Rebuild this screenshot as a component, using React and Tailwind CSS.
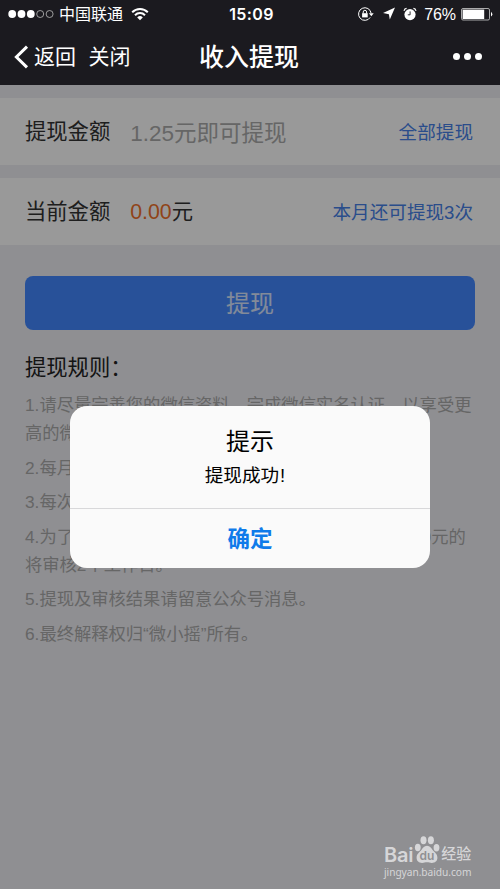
const rules = [
  ["1.请尽量完善您的微信资料，完成微信实名认证，以享受更", "高的微信提现额度。"],
  ["2.每月可提现3次。"],
  ["3.每次提现金额不低于1.25元。"],
  ["4.为了保障您的账户资金安全，单次提现金额大于100元的", "将审核2个工作日。"],
  ["5.提现及审核结果请留意公众号消息。"],
  ["6.最终解释权归“微小摇”所有。"],
];

const StatusBar = () => {
  return (
    <div className="h-7 flex items-center justify-between relative">
      <div className="flex items-center pl-2">
        <svg width="46" height="10" viewBox="0 0 46 10" fill="white">
          <circle cx="4.2" cy="5" r="3.9" />
          <circle cx="13.5" cy="5" r="3.9" />
          <circle cx="22.8" cy="5" r="3.9" />
          <circle cx="32.2" cy="5" r="3.5" fill="none" stroke="#bbb" strokeWidth="0.8" />
          <circle cx="41.6" cy="5" r="3.5" fill="none" stroke="#bbb" strokeWidth="0.8" />
        </svg>
        <span className="ml-[5px] pt-px text-[16px] leading-7">中国联通</span>
        <svg className="ml-2 -mt-px" width="18" height="14" viewBox="0 0 18 14" fill="none" stroke="white" strokeWidth="2">
          <path d="M1.2 5.2a11 11 0 0 1 15.6 0" />
          <path d="M4 8.2a7 7 0 0 1 10 0" />
          <path d="M9 13.2 6.2 10.4a4 4 0 0 1 5.6 0z" fill="white" stroke="none" />
        </svg>
      </div>

      <span className="absolute left-1/2 top-0 -translate-x-1/2 ml-[1.5px] font-[Inter] font-semibold text-[16px] leading-7 tracking-[0.4px]">
        15:09
      </span>

      <div className="flex items-center pr-[7px]">
        {/* Rotation lock */}
        <svg className="-mt-px" width="16" height="14" viewBox="0 0 16 14" fill="none" stroke="white" strokeWidth="1">
          <path d="M12.2 10.4A6.3 6.3 0 1 1 13.1 6.2" />
          <path d="M10.9 6.2h4.8l-2.4 3z" fill="white" stroke="none" />
          <rect x="4.1" y="6.2" width="5.6" height="4.2" fill="white" stroke="none" />
          <path d="M5.2 6.5V5a1.7 1.7 0 0 1 3.4 0v1.5" />
        </svg>
        {/* Location */}
        <svg className="ml-[9px] -mt-px" width="12" height="13" viewBox="0 0 12 13" fill="white">
          <path d="M12 .4 6.8 12.6 5.9 7.2 0 6.1z" />
        </svg>
        {/* Alarm */}
        <svg className="ml-[8px] -mt-px" width="14" height="14" viewBox="0 0 14 14" fill="white">
          <circle cx="7" cy="7.6" r="5.6" />
          <path d="M1 3.8A3 3 0 0 1 3.6 1.4M13 3.8A3 3 0 0 0 10.4 1.4" fill="none" stroke="white" strokeWidth="1.1" />
          <path d="M7.1 4.4v3.4H4.8" fill="none" stroke="#1b1a1f" strokeWidth="0.9" />
        </svg>
        <span className="ml-[7px] pt-px text-[16px] leading-7 tracking-[-0.1px]">76%</span>
        {/* Battery */}
        <svg className="ml-[5px]" width="32" height="13" viewBox="0 0 32 13" fill="none">
          <rect x="0.5" y="0.5" width="28" height="11.5" rx="1.5" stroke="#bbb" strokeWidth="0.9" />
          <rect x="1.6" y="1.6" width="21.6" height="9.4" fill="white" />
          <path d="M30 3.8q2.6 2.4 0 4.8z" fill="white" />
        </svg>
      </div>
    </div>
  );
};

const NavBar = () => {
  return (
    <div className="h-[57px] flex items-center relative pl-[14px] pr-[18.5px]">
      <svg width="15" height="24" viewBox="0 0 15 24" fill="none" stroke="white" strokeWidth="3">
        <path d="M13 1.6 2.4 12 13 22.4" />
      </svg>
      <span className="ml-[5px] pt-px text-[21px]">返回</span>
      <span className="ml-[12.5px] pt-px text-[21px]">关闭</span>
      <h1 className="absolute left-1/2 -translate-x-1/2 -ml-px pt-[2px] text-[25px] font-medium whitespace-nowrap">
        收入提现
      </h1>
      <div className="ml-auto -mt-px flex gap-[4px]">
        <span className="size-[7px] rounded-full bg-white" />
        <span className="size-[7px] rounded-full bg-white" />
        <span className="size-[7px] rounded-full bg-white" />
      </div>
    </div>
  );
};

const Row = ({ label, children, action }) => {
  return (
    <div className="h-[67px] mt-[13px] px-[25px] pt-[2px] flex items-center bg-white">
      <span className="text-[21.3px] text-[#333]">{label}</span>
      <div className="ml-5">{children}</div>
      <span className="ml-auto mr-[2px] text-[18.6px] text-[#4680e8]">{action}</span>
    </div>
  );
};

const Watermark = () => {
  return (
    <div className="absolute left-[384px] top-[835px] w-[90px] text-[#d6d6d8]">
      <div className="flex items-end h-[29px]">
        <span className="font-[Inter] font-semibold text-[20px] leading-[17px] tracking-[-0.2px]">Bai</span>
        <svg className="ml-px" width="26" height="29" viewBox="0 0 26 29" fill="currentColor">
          <ellipse cx="3.8" cy="12.5" rx="2.9" ry="3.7" />
          <ellipse cx="9.5" cy="5.2" rx="3" ry="4" />
          <ellipse cx="16.9" cy="5.2" rx="3" ry="4" />
          <ellipse cx="22.5" cy="12.7" rx="2.9" ry="3.7" />
          <path d="M13 10.8c3 0 4.3 2.3 5.6 4.3 1.6 2.2 4.8 3.8 4.8 7.6 0 3.4-2.5 5.2-5.5 5.2-2 0-3-.7-4.9-.7s-3 .7-4.9.7c-3 0-5.5-1.8-5.5-5.2 0-3.8 3.2-5.4 4.8-7.6 1.3-2 2.6-4.3 5.6-4.3z" />
          <text x="13" y="25" textAnchor="middle" fontFamily="Inter" fontWeight="600" fontSize="12" fill="#8f8f92">du</text>
        </svg>
        <span className="ml-px text-[15px] leading-[20px] font-medium">经验</span>
      </div>
      <div className="font-['Noto_Sans'] text-[10.2px] leading-[15px] mt-px tracking-[-0.05px] whitespace-nowrap">
        jingyan.baidu.com
      </div>
    </div>
  );
};

const Dialog = () => {
  return (
    <div className="absolute left-[70px] top-[406px] w-[360px] h-[162px] rounded-[17px] bg-[#fafafa] text-center text-black flex flex-col">
      <div className="h-[102px] pt-5">
        <h2 className="text-[24px] leading-8">提示</h2>
        <p className="mt-[2px] pr-[10px] text-[18.6px] leading-8">
          提现成功<span className="ml-px">!</span>
        </p>
      </div>
      <button className="flex-1 border-t border-[#d8d8da] pt-[2px] text-[22.5px] font-bold text-[#0f7bea]">
        确定
      </button>
    </div>
  );
};

const App = () => {
  return (
    <div className="relative w-[500px] h-[889px] overflow-hidden bg-[#efeff4] font-['Liberation_Sans','Noto_Sans_CJK_SC',sans-serif]">
      <header className="h-[85px] bg-[#1b1a1f] text-white">
        <StatusBar />
        <NavBar />
      </header>

      <main className="relative h-[804px] flow-root">
        <Row label="提现金额" action="全部提现">
          <span className="relative top-px text-[22.5px] text-[#aaa]">1.25元即可提现</span>
        </Row>
        <Row label="当前金额" action="本月还可提现3次">
          <span className="text-[21.3px] text-[#333]">
            <span className="text-[#f0702a]">0.00</span>元
          </span>
        </Row>

        <button className="block mt-[31px] mx-[25px] w-[450px] h-[54px] pt-[2px] rounded-lg bg-[#4388ff] text-[24px] text-white/80">
          提现
        </button>

        <section className="mt-[22px] pl-[25px]">
          <h3 className="text-[21.3px] leading-8 text-[#222]">提现规则：</h3>
          <div className="mt-[7px] flex flex-col gap-[6.5px] text-[17.3px] leading-7 text-[#aaa]">
            {rules.map((lines, index) => (
              <div key={index}>
                {lines.map((line) => (
                  <p key={line} className="whitespace-nowrap">
                    {line}
                  </p>
                ))}
              </div>
            ))}
          </div>
        </section>

        {/* Mask */}
        <div className="absolute inset-0 bg-black/40" />
      </main>

      <Dialog />
      <Watermark />
    </div>
  );
};

export default App;
